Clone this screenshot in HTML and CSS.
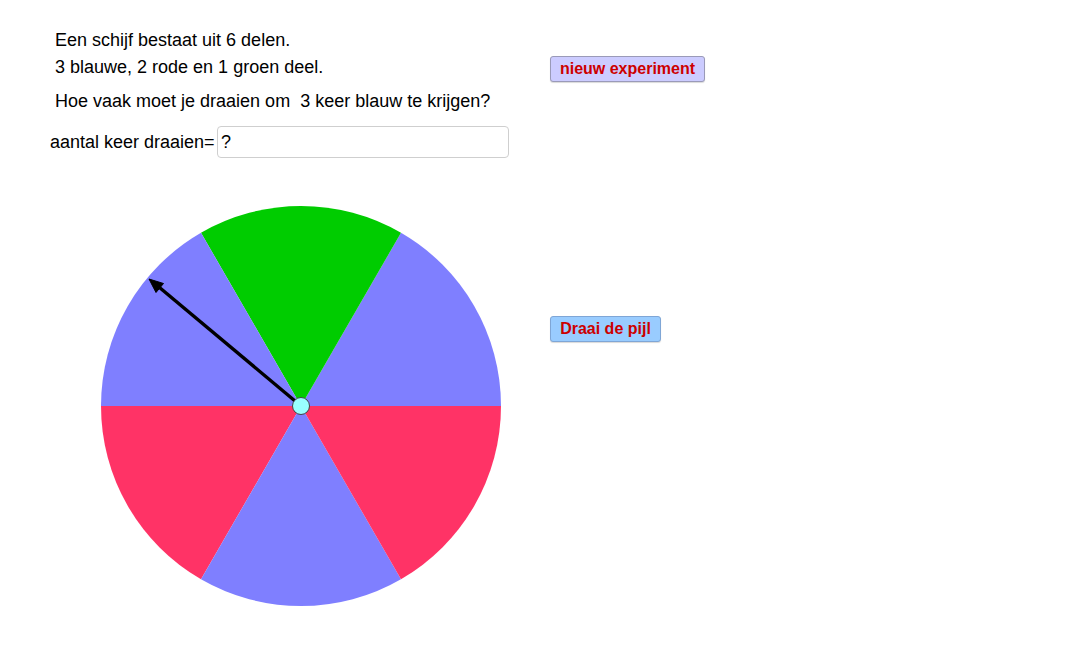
FILE: index.html
```html
<!DOCTYPE html>
<html lang="nl">
<head>
<meta charset="utf-8">
<title>Draaischijf</title>
<link rel="stylesheet" href="styles.css">
</head>
<body>
<div class="applet">
  <div class="left">
    <p class="line l1">Een schijf bestaat uit 6 delen.</p>
    <p class="line l2">3 blauwe, 2 rode en 1 groen deel.</p>
    <p class="line l3">Hoe vaak moet je draaien om&nbsp; 3 keer blauw te krijgen?</p>
    <div class="answer">
      <span class="label">aantal keer draaien=</span>
      <div class="field">?</div>
    </div>
    <svg class="wheel" width="402" height="402" viewBox="0 0 402 402">
      <path fill="#7f7fff" d="M201 201 L401 201 A200 200 0 0 0 301 27.8 Z"/>
      <path fill="#00cc00" d="M201 201 L301 27.8 A200 200 0 0 0 101 27.8 Z"/>
      <path fill="#7f7fff" d="M201 201 L101 27.8 A200 200 0 0 0 1 201 Z"/>
      <path fill="#ff3366" d="M201 201 L1 201 A200 200 0 0 0 101 374.2 Z"/>
      <path fill="#7f7fff" d="M201 201 L101 374.2 A200 200 0 0 0 301 374.2 Z"/>
      <path fill="#ff3366" d="M201 201 L301 374.2 A200 200 0 0 0 401 201 Z"/>
      <line x1="201" y1="201" x2="59.5" y2="82.5" stroke="#000" stroke-width="3.4"/>
      <polygon points="49,74 63.5,78.5 56,87.5" fill="#000" stroke="#000" stroke-width="1" stroke-linejoin="round"/>
      <circle cx="201" cy="201" r="8.5" fill="#99ffff" stroke="#444" stroke-width="1"/>
    </svg>
  </div>
  <div class="right">
    <button class="btn btn-new" type="button">nieuw experiment</button>
    <button class="btn btn-spin" type="button">Draai de pijl</button>
  </div>
</div>
</body>
</html>
```
FILE: styles.css
```css
html, body {
  margin: 0;
  padding: 0;
  background: #ffffff;
}
body {
  font-family: "Liberation Sans", Arial, sans-serif;
  font-size: 18px;
  color: #000;
}
.applet {
  display: flex;
  width: 1080px;
  height: 665px;
}
.left {
  width: 550px;
  display: flex;
  flex-direction: column;
  align-items: flex-start;
  padding-top: 30px;
}
.line {
  margin: 0;
  padding-left: 55px;
  line-height: 20px;
  white-space: nowrap;
}
.l2 { margin-top: 7px; }
.l3 { margin-top: 14px; }
.answer {
  display: flex;
  align-items: center;
  margin-top: 15px;
  padding-left: 50px;
}
.label {
  width: 167px;
  line-height: 20px;
  white-space: nowrap;
}
.field {
  box-sizing: border-box;
  width: 292px;
  height: 32px;
  border: 1px solid #cfcfcf;
  border-radius: 4px;
  padding-left: 3px;
  line-height: 30px;
}
.wheel {
  display: block;
  margin-top: 47px;
  margin-left: 100px;
}
.right {
  display: flex;
  flex-direction: column;
  align-items: flex-start;
  padding-top: 56px;
}
.btn {
  box-sizing: border-box;
  height: 26px;
  padding: 0;
  border: 1px solid #9a9ab8;
  border-radius: 3px;
  font-family: "Liberation Sans", Arial, sans-serif;
  font-weight: bold;
  font-size: 16px;
  color: #cc0000;
  text-align: center;
  box-shadow: 0 1px 1px rgba(0,0,0,0.15);
}
.btn-new {
  width: 155px;
  background: #ccccff;
}
.btn-spin {
  width: 111px;
  margin-top: 234px;
  background: #99ccff;
  border-color: #7fa6d6;
}
```
